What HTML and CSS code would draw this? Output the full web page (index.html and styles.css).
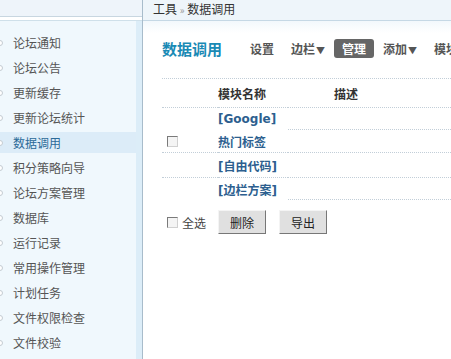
FILE: index.html
```html
<!DOCTYPE html>
<html lang="zh-CN">
<head>
  <meta charset="UTF-8" />
  <title>数据调用</title>
  <link rel="stylesheet" href="styles.css">
</head>
<body>
  <div class="layout">
    <div class="side">
      <div class="side-head"><div class="side-band"></div></div>
      <ul class="menu">
        <li>论坛通知</li>
        <li>论坛公告</li>
        <li>更新缓存</li>
        <li>更新论坛统计</li>
        <li class="active">数据调用</li>
        <li>积分策略向导</li>
        <li>论坛方案管理</li>
        <li>数据库</li>
        <li>运行记录</li>
        <li>常用操作管理</li>
        <li>计划任务</li>
        <li>文件权限检查</li>
        <li>文件校验</li>
      </ul>
    </div>

    <div class="main">
      <div class="crumb">工具 <span class="sep">»</span> 数据调用</div>
      <div class="content">
        <div class="tabs">
          <h3>数据调用</h3>
          <a class="tab">设置</a>
          <a class="tab">边栏<span class="arr">▼</span></a>
          <a class="tab current">管理</a>
          <a class="tab">添加<span class="arr">▼</span></a>
          <a class="tab">模块</a>
        </div>

        <div class="list">
          <div class="row head full">
            <div class="c-chk"></div>
            <div class="c-name">模块名称</div>
            <div class="c-desc">描述</div>
          </div>
          <div class="row r1">
            <div class="c-chk"></div>
            <div class="c-name"><a class="lk">[Google]</a></div>
            <div class="c-desc line"></div>
          </div>
          <div class="row r2 full">
            <div class="c-chk"><span class="box"></span></div>
            <div class="c-name"><a class="lk">热门标签</a></div>
            <div class="c-desc"></div>
          </div>
          <div class="row r3 full">
            <div class="c-chk"></div>
            <div class="c-name"><a class="lk">[自由代码]</a></div>
            <div class="c-desc"></div>
          </div>
          <div class="row r4">
            <div class="c-chk"></div>
            <div class="c-name"><a class="lk">[边栏方案]</a></div>
            <div class="c-desc line"></div>
          </div>
        </div>

        <div class="foot">
          <label class="all"><span class="box"></span>全选</label>
          <button class="btn">删除</button>
          <button class="btn">导出</button>
        </div>
      </div>
    </div>
  </div>
</body>
</html>
```

FILE: styles.css
```css
body {
  margin: 0;
  font-family: "Noto Sans CJK SC", sans-serif;
  font-size: 12px;
  color: #333;
  background: #fff;
}
.layout {
  display: flex;
  height: 100vh;
  overflow: hidden;
}
.side {
  width: 142px;
  flex: none;
  border-right: 1px solid #a8bccb;
  background: linear-gradient(to right, #f0f8fd 136px, #dcedf8 136px);
}
.side-head {
  background: #fff;
  padding-bottom: 3px;
  border-bottom: 1px solid #cfe0ea;
}
.side-band {
  height: 16px;
  background: #eef4fa;
  border-bottom: 1px solid #c8d6e0;
}
.menu {
  list-style: none;
  margin: 0;
  padding: 11px 0 0;
}
.menu li {
  position: relative;
  height: 21px;
  line-height: 21px;
  margin-bottom: 4px;
  padding-left: 13px;
  color: #555;
  width: 123px;
}
.menu li:before {
  content: "";
  position: absolute;
  left: -3px;
  top: 8px;
  width: 4px;
  height: 4px;
  border: 1px solid #c4ccd2;
  border-radius: 50%;
  background: #fff;
}
.menu li.active {
  background: #dcecf8;
  color: #2b6a98;
}
.main {
  flex: 1;
  min-width: 0;
}
.crumb {
  height: 20px;
  line-height: 18px;
  padding-left: 10px;
  background: #eef5fa;
  border-bottom: 1px solid #c5d8e5;
  color: #333;
  white-space: nowrap;
}
.sep {
  color: #999;
  font-size: 10px;
}
.content {
  padding: 16px 0 0 19px;
  background: linear-gradient(#f2f8fc, #fff 12px);
}
.tabs {
  display: flex;
  align-items: center;
  height: 22px;
  white-space: nowrap;
}
.tabs h3 {
  margin: 0 20px 0 0;
  font-size: 15px;
  color: #1a8ab5;
}
.tab {
  font-weight: bold;
  color: #555;
  padding: 0 8px;
  height: 19px;
  line-height: 19px;
  margin-right: 1px;
  border-radius: 3px;
}
.arr {
  font-size: 9px;
  margin-left: 1px;
}
.tab.current {
  background: #666;
  color: #fff;
}
.list {
  margin-top: 19px;
  border-top: 1px dotted #c2ced8;
}
.row {
  display: flex;
}
.row > div {
  display: flex;
  align-items: center;
}
.c-chk {
  width: 56px;
  padding-left: 5px;
  box-sizing: border-box;
}
.c-name {
  width: 70px;
  white-space: nowrap;
}
.c-desc {
  flex: 1;
  padding-left: 46px;
}
.row.full > div,
.row > .line {
  border-bottom: 1px dotted #c2ced8;
}
.row.head { height: 29px; font-weight: bold; }
.row.r1 { height: 22px; }
.row.r2 { height: 23px; }
.row.r3 { height: 25px; }
.row.r4 { height: 22px; }
.lk {
  font-weight: bold;
  color: #2d5f8f;
  font-family: "DejaVu Sans", "Noto Sans CJK SC", sans-serif;
  font-size: 12px;
}
.box {
  display: inline-block;
  width: 9px;
  height: 9px;
  border: 1px solid;
  border-color: #7a7a7a #d0d0d0 #d0d0d0 #7a7a7a;
  background: #f4f4f4;
  vertical-align: middle;
}
.foot {
  display: flex;
  align-items: center;
  margin-top: 10px;
  padding-left: 5px;
}
.all {
  display: flex;
  align-items: center;
  gap: 4px;
  color: #444;
  width: 51px;
}
.btn {
  width: 48px;
  height: 24px;
  margin-right: 13px;
  padding: 0;
  font-family: "Noto Sans CJK SC", sans-serif;
  font-size: 12px;
  color: #222;
  background: #e0e0e0;
  border: 1px solid;
  border-color: #f4f4f4 #777 #777 #f4f4f4;
}
```
